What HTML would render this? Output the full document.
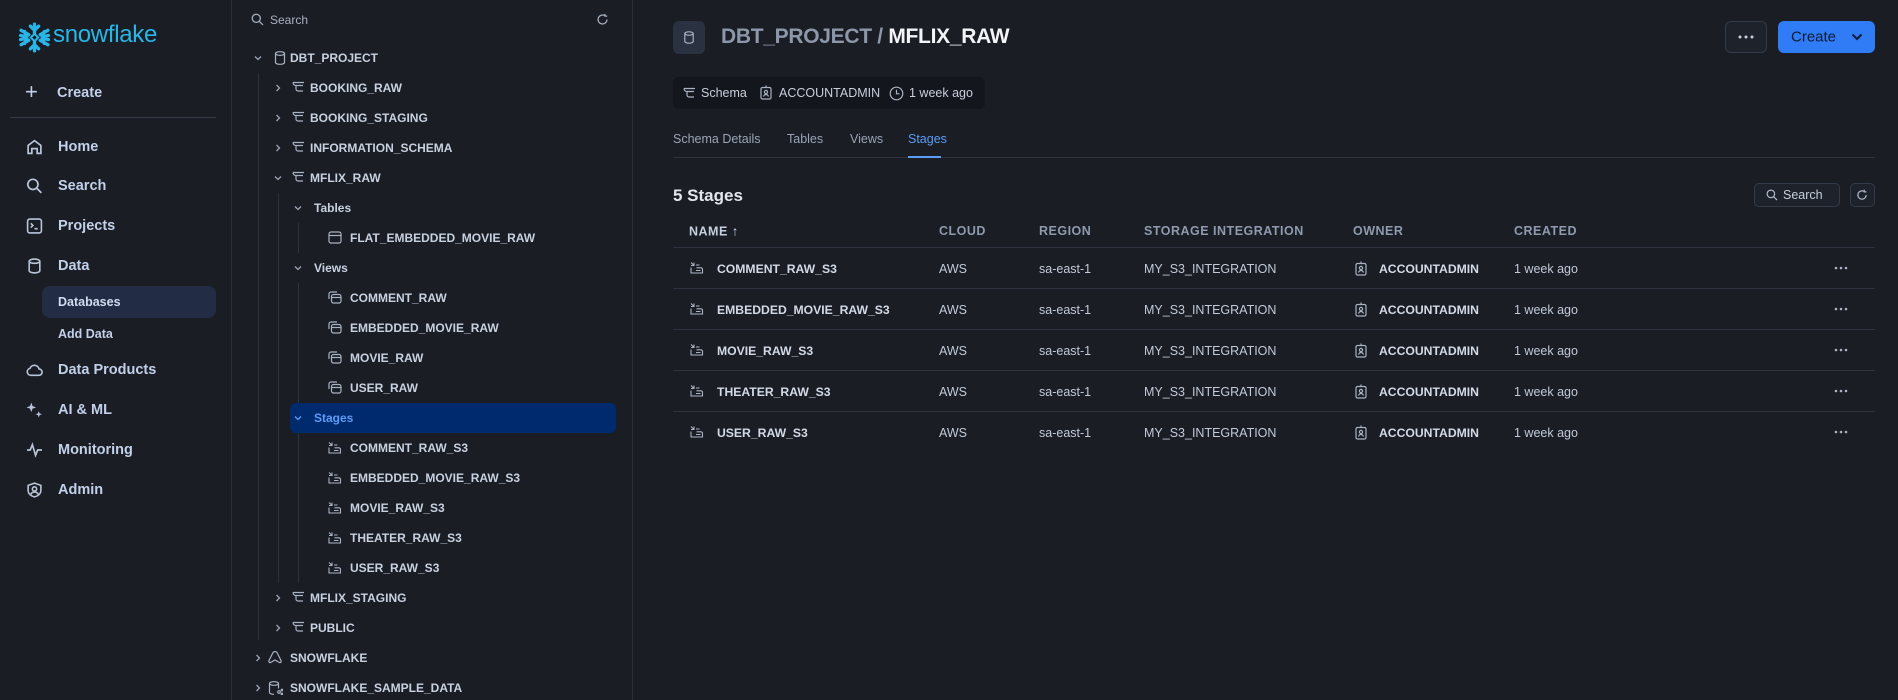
<!DOCTYPE html>
<html><head><meta charset="utf-8"><style>
*{box-sizing:border-box;margin:0;padding:0}
body{width:1898px;height:700px;background:#1a1d24;font-family:"Liberation Sans",Arial,sans-serif;color:#c8d2e4;overflow:hidden;position:relative}
.a{position:absolute;white-space:nowrap}
.nav{font-size:14.5px;font-weight:bold;color:#c3d0ea;transform:translateY(-50%)}
.ni{position:absolute;left:26px;width:17px;height:17px;transform:translateY(-50%)}
.t{font-size:12px;font-weight:bold;color:#c8d1e0;transform:translateY(-50%)}
.th{font-size:12.5px;font-weight:bold;color:#8f9aae;letter-spacing:.5px;transform:translateY(-50%)}
.td{font-size:12.5px;color:#c2cad8;transform:translateY(-50%)}
.tb{font-size:12.2px;font-weight:bold;color:#d3dae6;transform:translateY(-50%)}
.line{position:absolute;background:#2c323e;height:1px}
.vl{position:absolute;width:1px;background:#2c323e}
svg{display:block}
</style></head><body>

<div class="a" style="left:231px;top:0;width:1px;height:700px;background:#2a2f3a"></div>
<div class="a" style="left:632px;top:0;width:1px;height:700px;background:#2a2f3a"></div>

<svg class="a" style="left:18px;top:21px" width="33" height="33" viewBox="0 0 32 32" fill="none" stroke="#29b5e8" stroke-width="3.2" stroke-linecap="round">
<path d="M16 3v9M12 5l4 4 4-4M16 29v-9M12 27l4-4 4 4M3 9l7.5 4.3M2.5 14l5.5 1.3-1.5-5M29 9l-7.5 4.3M29.5 14l-5.5 1.3 1.5-5M3 23l7.5-4.3M2.5 18l5.5-1.3-1.5 5M29 23l-7.5-4.3M29.5 18l-5.5-1.3 1.5 5"/>
<rect x="13.5" y="13.5" width="5" height="5" transform="rotate(45 16 16)" stroke-width="2"/></svg>
<div class="a" style="left:53px;top:21px;font-size:24px;color:#29b5e8;letter-spacing:-.3px">snowflake</div>

<div class="a" style="left:25px;top:83px;font-size:22px;color:#c3d0ea;line-height:18px">+</div>
<div class="a nav" style="left:57px;top:93px">Create</div>
<div class="line" style="left:10px;top:117px;width:206px;background:#333946"></div>

<svg class="ni" style="top:147px" viewBox="0 0 16 16" fill="none" stroke="#b9c4d8" stroke-width="1.6"><path d="M2 14V6.5L8 2l6 4.5V14h-3.5V9.5h-5V14z"/></svg>
<div class="a nav" style="left:58px;top:147px">Home</div>
<svg class="ni" style="top:186px" viewBox="0 0 16 16" fill="none" stroke="#b9c4d8" stroke-width="1.6"><circle cx="6.5" cy="6.5" r="4.8"/><path d="M10 10l4.5 4.5"/></svg>
<div class="a nav" style="left:58px;top:186px">Search</div>
<svg class="ni" style="top:226px" viewBox="0 0 16 16" fill="none" stroke="#b9c4d8" stroke-width="1.5"><rect x="1.5" y="1.5" width="13" height="13" rx="2"/><path d="M4.5 5.5l2 2-2 2M8 10.5h3"/></svg>
<div class="a nav" style="left:58px;top:226px">Projects</div>
<svg class="ni" style="top:266px" viewBox="0 0 16 16" fill="none" stroke="#b9c4d8" stroke-width="1.5"><ellipse cx="8" cy="3.5" rx="5" ry="2"/><path d="M3 3.5v9c0 1.1 2.2 2 5 2s5-.9 5-2v-9"/></svg>
<div class="a nav" style="left:58px;top:266px">Data</div>
<div class="a" style="left:42px;top:286px;width:174px;height:32px;background:#222c45;border-radius:8px"></div>
<div class="a" style="left:58px;top:302px;font-size:12.5px;font-weight:bold;color:#d2dcf0;transform:translateY(-50%)">Databases</div>
<div class="a" style="left:58px;top:334px;font-size:12.5px;font-weight:bold;color:#c3d0ea;transform:translateY(-50%)">Add Data</div>
<svg class="ni" style="top:370px" viewBox="0 0 16 16" fill="none" stroke="#b9c4d8" stroke-width="1.5"><path d="M4.5 13h7.5a3 3 0 0 0 .3-6 4.5 4.5 0 0 0-8.6-.5A3.3 3.3 0 0 0 4.5 13z"/></svg>
<div class="a nav" style="left:58px;top:370px">Data Products</div>
<svg class="ni" style="top:410px" viewBox="0 0 16 16" fill="#b9c4d8"><path d="M5 1l1.2 3.3L9.5 5.5 6.2 6.7 5 10 3.8 6.7.5 5.5l3.3-1.2zM12 9l.8 2.2 2.2.8-2.2.8L12 15l-.8-2.2L9 12l2.2-.8z"/></svg>
<div class="a nav" style="left:58px;top:410px">AI &amp; ML</div>
<svg class="ni" style="top:450px" viewBox="0 0 16 16" fill="none" stroke="#b9c4d8" stroke-width="1.6"><path d="M1 8h3l2-5 3 10 2-5h4"/></svg>
<div class="a nav" style="left:58px;top:450px">Monitoring</div>
<svg class="ni" style="top:490px" viewBox="0 0 16 16" fill="none" stroke="#b9c4d8" stroke-width="1.5"><path d="M8 1.5l6 2.2v4.5c0 3.3-2.6 5.6-6 6.3-3.4-.7-6-3-6-6.3V3.7z"/><circle cx="8" cy="7" r="2"/><path d="M4.5 12c.8-1.5 2-2.2 3.5-2.2s2.7.7 3.5 2.2"/></svg>
<div class="a nav" style="left:58px;top:490px">Admin</div>

<svg class="a" style="left:251px;top:13px" width="13" height="13" viewBox="0 0 16 16" fill="none" stroke="#a7b0c0" stroke-width="1.6"><circle cx="6.5" cy="6.5" r="5"/><path d="M10.2 10.2l4.5 4.5"/></svg>
<div class="a" style="left:270px;top:20px;font-size:12px;color:#a7b0c0;transform:translateY(-50%)">Search</div>
<svg class="a" style="left:596px;top:13px" width="13" height="13" viewBox="0 0 16 16" fill="none" stroke="#a7b0c0" stroke-width="1.5"><path d="M13.5 8A5.5 5.5 0 1 1 11 3.4M11 1v2.8h2.8"/></svg>

<div class="vl" style="left:258px;top:73px;height:567px"></div>
<div class="vl" style="left:278px;top:193px;height:390px"></div>
<div class="vl" style="left:298px;top:223px;height:30px"></div>
<div class="vl" style="left:298px;top:283px;height:120px"></div>
<div class="vl" style="left:298px;top:433px;height:150px"></div>
<div class="a" style="left:290px;top:403px;width:326px;height:30px;background:#002a6e;border-radius:6px"></div>

<div id="tree"></div>

<div class="a" style="left:673px;top:21px;width:32px;height:33px;background:#2a3140;border-radius:6px"></div>
<svg class="a" style="left:683px;top:31px" width="12" height="13" viewBox="0 0 12 13" fill="none" stroke="#a9b3c5" stroke-width="1.2"><ellipse cx="6" cy="2.5" rx="4.2" ry="1.7"/><path d="M1.8 2.5v8c0 .9 1.9 1.7 4.2 1.7s4.2-.8 4.2-1.7v-8"/></svg>
<div class="a" style="left:721px;top:37px;font-size:21px;font-weight:bold;transform:translateY(-50%);letter-spacing:-.3px"><span style="color:#8d97aa">DBT_PROJECT / </span><span style="color:#f2f4f8">MFLIX_RAW</span></div>

<div class="a" style="left:1725px;top:21px;width:42px;height:32px;border:1px solid #343b48;border-radius:6px;background:#1d222b"></div>
<svg class="a" style="left:1738px;top:35px" width="16" height="4" viewBox="0 0 16 4" fill="#c8d1e0"><circle cx="2" cy="2" r="1.5"/><circle cx="8" cy="2" r="1.5"/><circle cx="14" cy="2" r="1.5"/></svg>
<div class="a" style="left:1778px;top:21px;width:97px;height:32px;background:#2f7cf6;border-radius:6px"></div>
<div class="a" style="left:1791px;top:37px;font-size:15px;color:#0e1a33;transform:translateY(-50%)">Create</div>
<svg class="a" style="left:1851px;top:33px" width="12" height="8" viewBox="0 0 12 8" fill="none" stroke="#0e1a33" stroke-width="2"><path d="M1.5 1.5l4.5 4.5 4.5-4.5"/></svg>

<div class="a" style="left:673px;top:77px;width:312px;height:32px;background:#13161c;border-radius:6px"></div>
<svg class="a" style="left:683px;top:87px" width="13" height="12" viewBox="0 0 13 12" fill="none" stroke="#aab3c3" stroke-width="1.2"><path d="M1 1.5h11M1 1.5c0 2 1.5 3 3 3h7M4 4.5v3.5c0 1.3 1 2 2 2h5"/></svg>
<div class="a td" style="left:701px;top:93px;color:#c7cfdc">Schema</div>
<svg class="a" style="left:760px;top:85px" width="12" height="15" viewBox="0 0 12 15" fill="none" stroke="#aab3c3" stroke-width="1.2"><rect x="1" y="2.5" width="10" height="11.5" rx="1.5"/><path d="M6 .5v2.5"/><circle cx="6" cy="7" r="1.6"/><path d="M3.5 11.5c.5-1.3 1.4-2 2.5-2s2 .7 2.5 2"/></svg>
<div class="a td" style="left:779px;top:93px;color:#c7cfdc">ACCOUNTADMIN</div>
<svg class="a" style="left:889px;top:86px" width="15" height="15" viewBox="0 0 15 15" fill="none" stroke="#aab3c3" stroke-width="1.2"><circle cx="7.5" cy="7.5" r="6.3"/><path d="M7.5 3.8v4h3"/></svg>
<div class="a td" style="left:909px;top:93px;color:#c7cfdc">1 week ago</div>

<div class="a td" style="left:673px;top:139px;color:#9aa4b6">Schema Details</div>
<div class="a td" style="left:787px;top:139px;color:#9aa4b6">Tables</div>
<div class="a td" style="left:850px;top:139px;color:#9aa4b6">Views</div>
<div class="a td" style="left:908px;top:139px;color:#5c9cf7">Stages</div>
<div class="line" style="left:673px;top:157px;width:1202px"></div>
<div class="a" style="left:908px;top:156px;width:33px;height:2px;background:#5c9cf7"></div>

<div class="a" style="left:673px;top:196px;font-size:17px;font-weight:bold;color:#e2e7ef;transform:translateY(-50%)">5 Stages</div>
<div class="a" style="left:1754px;top:183px;width:86px;height:24px;border:1px solid #343b48;border-radius:5px;background:#1d222b"></div>
<svg class="a" style="left:1766px;top:189px" width="12" height="12" viewBox="0 0 16 16" fill="none" stroke="#b0b9c8" stroke-width="1.6"><circle cx="6.5" cy="6.5" r="5"/><path d="M10.2 10.2l4.5 4.5"/></svg>
<div class="a td" style="left:1783px;top:195px;color:#c7cfdc">Search</div>
<div class="a" style="left:1850px;top:183px;width:25px;height:24px;border:1px solid #343b48;border-radius:5px;background:#1d222b"></div>
<svg class="a" style="left:1856px;top:189px" width="12" height="12" viewBox="0 0 16 16" fill="none" stroke="#b0b9c8" stroke-width="1.6"><path d="M13.5 8A5.5 5.5 0 1 1 11 3.4M11 1v2.8h2.8"/></svg>

<div class="a th" style="left:689px;top:231px;color:#c5cfe0">NAME <span style="font-size:13px">↑</span></div>
<div class="a th" style="left:939px;top:231px">CLOUD</div>
<div class="a th" style="left:1039px;top:231px">REGION</div>
<div class="a th" style="left:1144px;top:231px">STORAGE INTEGRATION</div>
<div class="a th" style="left:1353px;top:231px">OWNER</div>
<div class="a th" style="left:1514px;top:231px">CREATED</div>
<div class="line" style="left:673px;top:247px;width:1202px"></div>

<div id="rows"></div>

<script>
var stIcon='<svg viewBox="0 0 14 14" width="14" height="14" fill="none" stroke="#aab3c3" stroke-width="1.1"><path d="M1 1.5l3 3M1 4.5h3V1.5M1 6.5v5.5h11.5V8.5c0-1-.7-1.7-1.7-1.7H6.5M6 9.5h4.5M6 4h3.5"/></svg>';
var schIcon='<svg viewBox="0 0 13 12" width="13" height="12" fill="none" stroke="#aab3c3" stroke-width="1.2"><path d="M1 1.5h11M1 1.5c0 2 1.5 3 3 3h7M4 4.5v3.5c0 1.3 1 2 2 2h5"/></svg>';
var dbIcon='<svg viewBox="0 0 12 14" width="12" height="14" fill="none" stroke="#aab3c3" stroke-width="1.2"><ellipse cx="6" cy="2.5" rx="4.5" ry="1.8"/><path d="M1.5 2.5v9c0 1 2 1.8 4.5 1.8s4.5-.8 4.5-1.8v-9"/></svg>';
var tblIcon='<svg viewBox="0 0 14 13" width="14" height="13" fill="none" stroke="#aab3c3" stroke-width="1.2"><rect x="1" y="1" width="12" height="11" rx="2"/><path d="M1 4.5h12"/></svg>';
var viewIcon='<svg viewBox="0 0 14 13" width="14" height="13" fill="none" stroke="#aab3c3" stroke-width="1.2"><path d="M1 8V3c0-1.1.9-2 2-2h6"/><rect x="3.5" y="3.5" width="9.5" height="8.5" rx="2"/><path d="M3.5 6.5h9.5"/></svg>';
var snowIcon='<svg viewBox="0 0 14 13" width="14" height="13" fill="none" stroke="#aab3c3" stroke-width="1.2"><path d="M5 1.5L1 9.5c-.6 1.3.5 2.5 1.7 2L7 9l4.3 2.5c1.2.5 2.3-.7 1.7-2L9 1.5c-.7-1.2-3.3-1.2-4 0z"/></svg>';
var sampIcon='<svg viewBox="0 0 15 14" width="15" height="14" fill="none" stroke="#aab3c3" stroke-width="1.2"><ellipse cx="6" cy="2.5" rx="4.5" ry="1.8"/><path d="M1.5 2.5v9c0 1 2 1.8 4.5 1.8M10.5 2.5v5"/><circle cx="11" cy="11" r="1.3"/><circle cx="14" cy="9" r=".8"/><circle cx="14" cy="13" r=".8"/></svg>';
function chev(d){return d?'<svg viewBox="0 0 10 10" width="10" height="10" fill="none" stroke="#9aa4b5" stroke-width="1.3"><path d="M2 3.5l3 3 3-3"/></svg>':'<svg viewBox="0 0 10 10" width="10" height="10" fill="none" stroke="#9aa4b5" stroke-width="1.3"><path d="M3.5 2l3 3-3 3"/></svg>';}
var T=[
["DBT_PROJECT",253,1,274,dbIcon,290],
["BOOKING_RAW",273,0,292,schIcon,310],
["BOOKING_STAGING",273,0,292,schIcon,310],
["INFORMATION_SCHEMA",273,0,292,schIcon,310],
["MFLIX_RAW",273,1,292,schIcon,310],
["Tables",293,1,null,"",314],
["FLAT_EMBEDDED_MOVIE_RAW",null,0,328,tblIcon,350],
["Views",293,1,null,"",314],
["COMMENT_RAW",null,0,328,viewIcon,350],
["EMBEDDED_MOVIE_RAW",null,0,328,viewIcon,350],
["MOVIE_RAW",null,0,328,viewIcon,350],
["USER_RAW",null,0,328,viewIcon,350],
["Stages",293,1,null,"",314],
["COMMENT_RAW_S3",null,0,328,stIcon,350],
["EMBEDDED_MOVIE_RAW_S3",null,0,328,stIcon,350],
["MOVIE_RAW_S3",null,0,328,stIcon,350],
["THEATER_RAW_S3",null,0,328,stIcon,350],
["USER_RAW_S3",null,0,328,stIcon,350],
["MFLIX_STAGING",273,0,292,schIcon,310],
["PUBLIC",273,0,292,schIcon,310],
["SNOWFLAKE",253,0,268,snowIcon,290],
["SNOWFLAKE_SAMPLE_DATA",253,0,268,sampIcon,290]];
var h='';
T.forEach(function(r,i){var y=58+i*30;var sel=r[0]=="Stages";
if(r[1]!==null)h+='<div class="a" style="left:'+r[1]+'px;top:'+(y-5)+'px">'+chev(r[2]).replace(/#9aa4b5/,sel?'#5c9cf7':'#9aa4b5')+'</div>';
if(r[3]!==null)h+='<div class="a" style="left:'+r[3]+'px;top:'+(y-7)+'px">'+r[4]+'</div>';
h+='<div class="a t" style="left:'+r[5]+'px;top:'+y+'px;'+(sel?'color:#5c9cf7':'')+'">'+r[0]+'</div>';});
document.getElementById('tree').innerHTML=h;
var own='<svg viewBox="0 0 12 15" width="12" height="15" fill="none" stroke="#aab3c3" stroke-width="1.2"><rect x="1" y="2.5" width="10" height="11.5" rx="1.5"/><path d="M6 .5v2.5"/><circle cx="6" cy="7" r="1.6"/><path d="M3.5 11.5c.5-1.3 1.4-2 2.5-2s2 .7 2.5 2"/></svg>';
var dots='<svg viewBox="0 0 14 4" width="14" height="4" fill="#aab3c3"><circle cx="2" cy="2" r="1.3"/><circle cx="7" cy="2" r="1.3"/><circle cx="12" cy="2" r="1.3"/></svg>';
var R=["COMMENT_RAW_S3","EMBEDDED_MOVIE_RAW_S3","MOVIE_RAW_S3","THEATER_RAW_S3","USER_RAW_S3"];var g='';
R.forEach(function(n,i){var y=269+i*41;
g+='<div class="a" style="left:690px;top:'+(y-8)+'px">'+stIcon+'</div>';
g+='<div class="a tb" style="left:717px;top:'+y+'px">'+n+'</div>';
g+='<div class="a td" style="left:939px;top:'+y+'px">AWS</div>';
g+='<div class="a td" style="left:1039px;top:'+y+'px">sa-east-1</div>';
g+='<div class="a td" style="left:1144px;top:'+y+'px">MY_S3_INTEGRATION</div>';
g+='<div class="a" style="left:1355px;top:'+(y-8)+'px">'+own+'</div>';
g+='<div class="a tb" style="left:1379px;top:'+y+'px">ACCOUNTADMIN</div>';
g+='<div class="a td" style="left:1514px;top:'+y+'px">1 week ago</div>';
g+='<div class="a" style="left:1834px;top:'+(y-3)+'px">'+dots+'</div>';
if(i<4)g+='<div class="line" style="left:673px;top:'+(y+19)+'px;width:1202px"></div>';});
document.getElementById('rows').innerHTML=g;
</script>
</body></html>
